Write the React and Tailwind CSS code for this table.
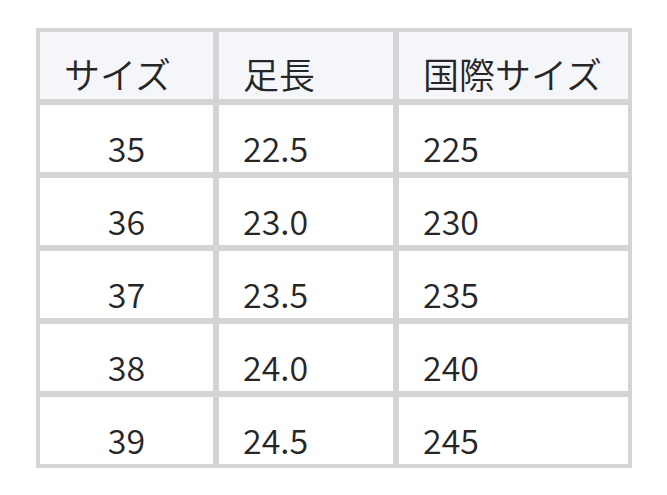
import React from "react";

const rows = [
  ["35", "22.5", "225"],
  ["36", "23.0", "230"],
  ["37", "23.5", "235"],
  ["38", "24.0", "240"],
  ["39", "24.5", "245"],
];

export default function App() {
  const font = { fontFamily: '"Noto Sans CJK JP", "Noto Sans", sans-serif' };
  return (
    <div className="w-[667px] h-[495px] bg-white pl-[36px] pt-[28px]" style={font}>
      <div className="w-[596px] bg-[#d4d4d4] p-[4px] grid grid-cols-[173px_174px_229px] gap-[6px] text-[34px] leading-[49px] [font-weight:350] text-[#262626]">
        <div className="h-[67px] bg-[#f5f6fa] flex items-end pl-6 pb-[1px] text-[36px] leading-[49px]">サイズ</div>
        <div className="h-[67px] bg-[#f5f6fa] flex items-end pl-6 pb-[1px] text-[36px] leading-[49px]">足長</div>
        <div className="h-[67px] bg-[#f5f6fa] flex items-end pl-6 pb-[1px] text-[36px] leading-[49px]">国際サイズ</div>
        {rows.map((r) => (
          <React.Fragment key={r[0]}>
            <div className="h-[67px] bg-white flex items-end justify-center">{r[0]}</div>
            <div className="h-[67px] bg-white flex items-end pl-6">{r[1]}</div>
            <div className="h-[67px] bg-white flex items-end pl-6">{r[2]}</div>
          </React.Fragment>
        ))}
      </div>
    </div>
  );
}
